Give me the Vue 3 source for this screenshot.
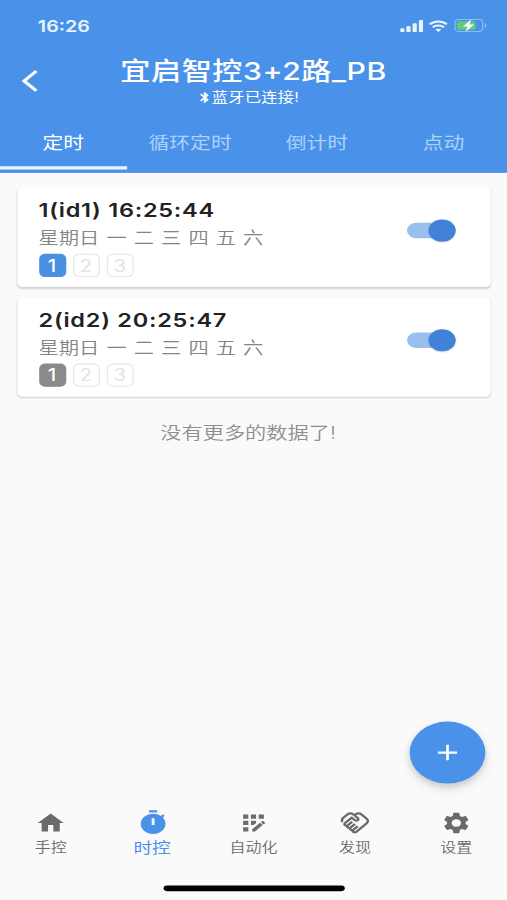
<template>
  <div class="viewport">
    <div class="phone">
      <header class="header">
        <div class="status-bar">
          <span class="clock">16:26</span>
          <div class="status-icons">
            <svg class="signal" viewBox="0 0 17 11">
              <rect x="0" y="7.4" width="3.1" height="3.6" rx="0.8" />
              <rect x="4.6" y="5.4" width="3.1" height="5.6" rx="0.8" />
              <rect x="9.2" y="3" width="3.1" height="8" rx="0.8" />
              <rect x="13.8" y="0" width="3.1" height="11" rx="0.8" />
            </svg>
            <svg class="wifi" viewBox="0 0 15 11">
              <path d="M0.9 3.9C4.6 0.4 10.4 0.4 14.1 3.9" />
              <path d="M3.2 6.6C5.6 4.4 9.4 4.4 11.8 6.6" />
              <path class="dot" d="M7.5 11L5.2 8.8C6.5 7.7 8.5 7.7 9.8 8.8Z" />
            </svg>
            <svg class="battery" viewBox="0 0 25 12">
              <rect class="shell" x="0.5" y="0.5" width="21" height="11" rx="3" />
              <rect class="level" x="2" y="2" width="14" height="8" rx="1.6" />
              <path class="cap" d="M23 4v4c1.8-.7 1.8-3.3 0-4z" />
              <path class="bolt" d="M13 0.3L6.6 6.9h3.6L8.4 11.8 15 5.1h-3.6z" />
            </svg>
          </div>
        </div>

        <div class="app-bar">
          <button class="back" aria-label="返回">
            <svg viewBox="0 0 12 20"><path d="M10.9 1.1L1.8 10L10.9 18.9" /></svg>
          </button>
          <div class="heading">
            <h1 class="title">宜启智控3+2路_PB</h1>
            <div class="subtitle">
              <svg class="bluetooth" viewBox="0 0 24 24">
                <path d="M17.71 7.71L12 2h-1v7.59L6.41 5 5 6.41 10.59 12 5 17.59 6.41 19 11 14.41V22h1l5.71-5.71-4.3-4.29 4.3-4.29zM13 5.83l1.88 1.88L13 9.59V5.83zm1.88 10.46L13 18.17v-3.76l1.88 1.88z" />
              </svg>
              <span>蓝牙已连接!</span>
            </div>
          </div>
        </div>

        <nav class="tabs">
          <button
            v-for="(tab, i) in tabs"
            :key="tab"
            class="tab"
            :class="{ active: i === activeTab }"
            @click="activeTab = i"
          >
            {{ tab }}
          </button>
        </nav>
      </header>

      <main class="content">
        <section v-for="timer in timers" :key="timer.id" class="card">
          <div class="info">
            <div class="time">{{ timer.id }}(id{{ timer.id }}) {{ timer.time }}</div>
            <div class="week">星期日 一 二 三 四 五 六</div>
            <div class="channels">
              <span
                v-for="n in 3"
                :key="n"
                class="channel"
                :class="n === 1 ? timer.state : ''"
              >{{ n }}</span>
            </div>
          </div>
          <button
            class="switch"
            :class="{ on: timer.enabled }"
            role="switch"
            :aria-checked="timer.enabled"
            @click="timer.enabled = !timer.enabled"
          >
            <span class="thumb"></span>
          </button>
        </section>
        <p class="no-more">没有更多的数据了!</p>
      </main>

      <button class="fab" aria-label="添加">
        <svg viewBox="0 0 24 24"><path d="M19 13h-6v6h-2v-6H5v-2h6V5h2v6h6v2z" /></svg>
      </button>

      <footer class="bottom">
        <nav class="bottom-nav">
          <button
            v-for="(item, i) in navItems"
            :key="item.label"
            class="nav-item"
            :class="{ active: i === activeNav }"
            @click="activeNav = i"
          >
            <svg viewBox="0 0 24 24"><path fill-rule="evenodd" :d="item.icon" /></svg>
            <span>{{ item.label }}</span>
          </button>
        </nav>
        <div class="home-indicator"></div>
      </footer>
    </div>
  </div>
</template>

<script setup>
import { ref } from 'vue'

const tabs = ['定时', '循环定时', '倒计时', '点动']
const activeTab = ref(0)
const activeNav = ref(1)

const timers = ref([
  { id: 1, time: '16:25:44', state: 'open', enabled: true },
  { id: 2, time: '20:25:47', state: 'close', enabled: true }
])

// 底部导航
const navItems = [
  {
    label: '手控',
    icon: 'M10 20v-6h4v6h5v-8h3L12 3 2 12h3v8z'
  },
  {
    label: '时控',
    icon: 'M9 1h6v2H9zM19.03 7.39l1.42-1.42c-.43-.51-.9-.99-1.41-1.41l-1.42 1.42C16.07 4.74 14.12 4 12 4c-4.97 0-9 4.03-9 9s4.02 9 9 9 9-4.03 9-9c0-2.12-.74-4.07-1.97-5.61zM13 14h-2V8h2v6z'
  },
  {
    label: '自动化',
    icon: 'M10 4h4v4h-4zM4 16h4v4H4zM4 10h4v4H4zM4 4h4v4H4zM16 4h4v4h-4zM11 17.86V20h2.1l5.98-5.97-2.12-2.12zM14 12.03V10h-4v4h2.03zM20.85 11.56l-1.41-1.41c-.2-.2-.51-.2-.71 0l-1.06 1.06 2.12 2.12 1.06-1.06c.2-.2.2-.51 0-.71z'
  },
  {
    label: '发现',
    icon: 'M12.22 19.85c-.18.18-.5.21-.71 0-.18-.18-.21-.5 0-.71l3.39-3.39-1.41-1.41-3.39 3.39c-.19.2-.51.19-.71 0-.21-.21-.18-.53 0-.71l3.39-3.39-1.41-1.41-3.39 3.39c-.18.18-.5.21-.71 0-.19-.19-.19-.51 0-.71l3.39-3.39-1.42-1.41-3.39 3.39c-.18.18-.5.21-.71 0-.19-.2-.19-.51 0-.71L9.52 8.4l1.87 1.86c.95.95 2.59.94 3.54 0 .98-.98.98-2.56 0-3.54l-1.86-1.86.28-.28c.78-.78 2.05-.78 2.83 0l4.24 4.24c.78.78.78 2.05 0 2.83l-8.2 8.2zm9.61-6.78c1.56-1.56 1.56-4.09 0-5.66l-4.24-4.24c-1.56-1.56-4.09-1.56-5.66 0l-.28.28-.28-.28c-1.56-1.56-4.09-1.56-5.66 0L2.17 6.71C.75 8.13.62 10.34 1.77 11.9l1.45-1.45c-.39-.75-.26-1.7.37-2.33l3.54-3.54c.78-.78 2.05-.78 2.83 0l3.56 3.56c.18.18.21.5 0 .71-.21.21-.53.18-.71 0L9.52 5.57l-5.8 5.79c-.98.97-.98 2.56 0 3.54.39.39.89.63 1.42.7.07.52.3 1.02.7 1.42.4.4.9.63 1.42.7.07.52.3 1.02.7 1.42.4.4.9.63 1.42.7.07.54.31 1.03.7 1.42.47.47 1.1.73 1.77.73s1.3-.26 1.77-.73l8.21-8.19z'
  },
  {
    label: '设置',
    icon: 'M19.14 12.94c.04-.3.06-.61.06-.94 0-.32-.02-.64-.07-.94l2.03-1.58c.18-.14.23-.41.12-.61l-1.92-3.32c-.12-.22-.37-.29-.59-.22l-2.39.96c-.5-.38-1.03-.7-1.62-.94l-.36-2.54c-.04-.24-.24-.41-.48-.41h-3.84c-.24 0-.43.17-.47.41l-.36 2.54c-.59.24-1.13.57-1.62.94l-2.39-.96c-.22-.08-.47 0-.59.22L2.74 8.87c-.12.21-.08.47.12.61l2.03 1.58c-.05.3-.09.63-.09.94s.02.64.07.94l-2.03 1.58c-.18.14-.23.41-.12.61l1.92 3.32c.12.22.37.29.59.22l2.39-.96c.5.38 1.03.7 1.62.94l.36 2.54c.05.24.24.41.48.41h3.84c.24 0 .44-.17.47-.41l.36-2.54c.59-.24 1.13-.56 1.62-.94l2.39.96c.22.08.47 0 .59-.22l1.92-3.32c.12-.22.07-.47-.12-.61l-2.01-1.58zM12 15.6c-1.98 0-3.6-1.62-3.6-3.6s1.62-3.6 3.6-3.6 3.6 1.62 3.6 3.6-1.62 3.6-3.6 3.6z'
  }
]
</script>

<style>
body {
  margin: 0;
  background: #fafafa;
}
</style>

<style scoped>
.viewport {
  width: 507px;
  height: 900px;
  overflow: hidden;
}

/* 375x812 逻辑尺寸铺满窗口 */
.phone {
  position: relative;
  display: flex;
  flex-direction: column;
  width: 375px;
  height: 812px;
  background: #fafafa;
  transform: scale(1.352, 1.10837);
  transform-origin: 0 0;
  font-family: Inter, 'Noto Sans CJK SC', sans-serif;
}

button {
  padding: 0;
  border: none;
  background: none;
  font-family: inherit;
  color: inherit;
}

svg {
  display: block;
  fill: currentColor;
}

/* 顶部 */
.header {
  flex: none;
  height: 156px;
  display: flex;
  flex-direction: column;
  background: #4a92e9;
  color: #fff;
}

.status-bar {
  height: 46px;
  padding: 0 15px 0 28px;
  display: flex;
  align-items: center;
  justify-content: space-between;
  box-sizing: border-box;
}

.clock {
  font-size: 14.5px;
  font-weight: 600;
  color: #e6f5ff;
}

.status-icons {
  display: flex;
  align-items: center;
  gap: 4.2px;
  color: #e6f5ff;
}

.signal {
  width: 17px;
  height: 11px;
}

.wifi {
  width: 14.4px;
  height: 11px;
}

.wifi path {
  fill: none;
  stroke: currentColor;
  stroke-width: 2;
}

.wifi .dot {
  fill: currentColor;
  stroke: none;
}

.battery {
  width: 24.5px;
  height: 12px;
}

.shell {
  fill: none;
  stroke: #8dbdf1;
}

.level {
  fill: #65c97d;
}

.cap {
  fill: #8dbdf1;
}

.bolt {
  fill: #fff;
}

.app-bar {
  height: 58px;
  display: flex;
  align-items: center;
}

.back {
  width: 45px;
  padding-left: 16px;
  box-sizing: border-box;
}

.back svg {
  width: 12px;
  height: 20px;
  margin-top: -4px;
  fill: none;
  stroke: #fff;
  stroke-width: 2.6;
}

.heading {
  flex: 1;
  display: flex;
  flex-direction: column;
  align-items: center;
  padding-right: 45px;
}

.title {
  margin: -5px 0 0;
  font-size: 22.3px;
  line-height: 29px;
  font-weight: 450;
  letter-spacing: 0.4px;
  white-space: nowrap;
}

.subtitle {
  display: flex;
  align-items: center;
  margin: 2px 8px 0 0;
  font-size: 12px;
  line-height: 16px;
  letter-spacing: 0.2px;
}

.bluetooth {
  width: 11px;
  height: 12px;
  stroke: currentColor;
  stroke-width: 1.2;
}

.tabs {
  display: flex;
  height: 49px;
}

.tab {
  flex: 1;
  border-bottom: 3px solid transparent;
  font-size: 15.4px;
  font-weight: 400;
  color: #acd1f7;
  white-space: nowrap;
}

.tab.active {
  border-bottom-color: #e6f4fd;
  color: #fff;
}

/* 定时列表 */
.content {
  flex: 1;
  padding: 13px 12.5px 0;
}

.card {
  height: 90px;
  margin-bottom: 9px;
  padding: 0 25.5px 0 16px;
  display: flex;
  justify-content: space-between;
  box-sizing: border-box;
  border-radius: 4px;
  background: #fff;
  box-shadow: 0 1px 1.5px rgba(0, 0, 0, 0.16);
}

.info {
  padding-top: 8.7px;
}

.time {
  font-size: 17.4px;
  line-height: 24px;
  font-weight: 600;
  letter-spacing: 0.55px;
  color: #222;
}

.week {
  font-size: 15px;
  line-height: 25px;
  color: #858585;
  font-weight: 350;
  word-spacing: 1px;
}

.channels {
  display: flex;
  gap: 5px;
  margin-top: 2.6px;
}

.channel {
  width: 20px;
  height: 20.5px;
  box-sizing: border-box;
  border: 1px solid #e8e8e8;
  border-radius: 4.5px;
  font-size: 15px;
  line-height: 19px;
  text-align: center;
  color: #e3e3e3;
}

.channel.open {
  border-color: #4a90e2;
  background: #4a90e2;
  color: #fff;
  font-weight: 500;
}

.channel.close {
  border-color: #8a8a8a;
  background: #8a8a8a;
  color: #fff;
  font-weight: 500;
}

.switch {
  width: 36px;
  height: 14px;
  margin-top: 32.4px;
  display: flex;
  align-items: center;
  border-radius: 7px;
  background: #bbb;
}

.switch.on {
  justify-content: flex-end;
  background: #99bfee;
}

.thumb {
  width: 20px;
  height: 20px;
  flex: none;
  border-radius: 50%;
  background: #fff;
  box-shadow: 0 0.5px 1.5px rgba(0, 0, 0, 0.2);
}

.switch.on .thumb {
  background: #4281d8;
}

.no-more {
  margin: 21.5px 8px 0 0;
  font-size: 15.7px;
  line-height: 22px;
  font-weight: 350;
  text-align: center;
  color: #8d8d8d;
}

/* 悬浮按钮 */
.fab {
  position: absolute;
  right: 16px;
  bottom: 105px;
  width: 56px;
  height: 56px;
  display: flex;
  align-items: center;
  justify-content: center;
  border-radius: 50%;
  background: #4a92e9;
  color: #fff;
  box-shadow: 0 3px 5px rgba(0, 0, 0, 0.14), 0 5px 10px rgba(0, 0, 0, 0.08);
}

.fab svg {
  width: 24px;
  height: 24px;
}

/* 底部 */
.bottom {
  flex: none;
  height: 87px;
  display: flex;
  flex-direction: column;
  justify-content: space-between;
  align-items: center;
  padding-bottom: 8px;
  box-sizing: border-box;
}

.bottom-nav {
  width: 100%;
  display: flex;
  padding-top: 5.5px;
}

.nav-item {
  flex: 1;
  display: flex;
  flex-direction: column;
  align-items: center;
  font-size: 11.8px;
  line-height: 20px;
  font-weight: 350;
  color: #6b6b6b;
}

.nav-item svg {
  width: 23px;
  height: 23px;
  margin: 0.3px 0 1.7px 0.8px;
}

.nav-item.active {
  font-size: 13.8px;
  font-weight: 400;
  color: #4a92e9;
}

.nav-item.active svg {
  width: 24.5px;
  height: 24.5px;
  margin: -0.4px 0 0 0.6px;
}

.home-indicator {
  width: 134px;
  height: 5px;
  border-radius: 3px;
  background: #000;
}
</style>
